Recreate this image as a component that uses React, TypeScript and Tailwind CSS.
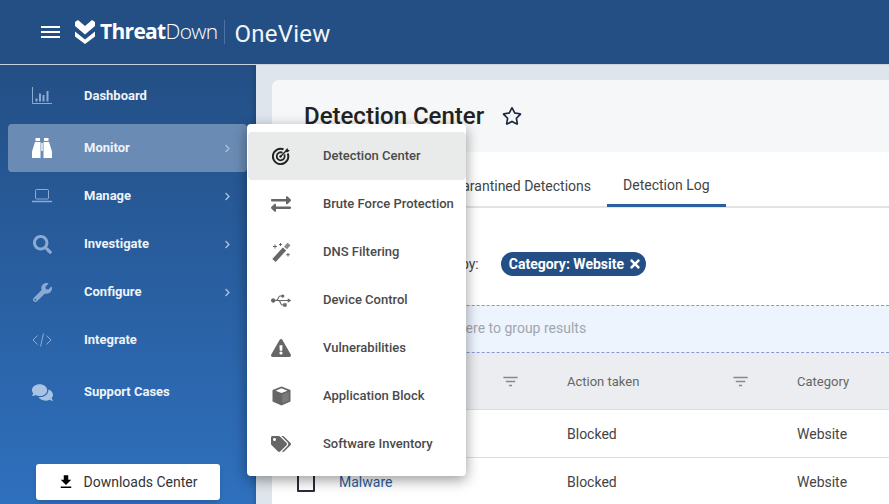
import React from "react";
import { FaSearch, FaWrench, FaComments, FaExchangeAlt, FaUsb, FaExclamationTriangle, FaTags, FaRegStar, FaChevronRight, FaTimes } from "react-icons/fa";
import { MdFileDownload, MdFilterList } from "react-icons/md";

function ChartIcon() {
  return (
    <svg width="20" height="18" viewBox="0 0 20 18" fill="none" stroke="currentColor">
      <path d="M.5 0v16.500H20" />
      <path d="M4.500 14.500v-3M8 14.500V6.500M11.500 14.500V8M15.500 14.500V4" strokeWidth="2" />
    </svg>
  );
}
function LaptopIcon() {
  return (
    <svg width="20" height="14" viewBox="0 0 20 14" fill="none" stroke="currentColor">
      <rect x="3.500" y="0.500" width="13" height="9.500" rx="1" />
      <path d="M.5 12.500h19" strokeWidth="1.500" strokeLinecap="round" />
    </svg>
  );
}
function CodeIcon() {
  return (
    <svg width="20" height="14" viewBox="0 0 20 14" fill="none" stroke="currentColor" strokeWidth="1">
      <path d="M5.500 2.500L1 7l4.500 4.500M14.500 2.500L19 7l-4.500 4.500M11.500 .5L8.500 13.500" />
    </svg>
  );
}
function BinocularsIcon() {
  return (
    <svg width="20" height="20" viewBox="0 0 20 20" fill="currentColor">
      <path d="M3.500 0H8v3H3.500zM12 0h4.500v3H12z" />
      <path d="M3 4h5.500v16H0v-6.500zM17 4h-5.500v16H20v-6.500z" />
      <path d="M9.300 5h1.400v8H9.300z" />
    </svg>
  );
}
function TargetIcon() {
  return (
    <svg width="18" height="18" viewBox="0 0 18 18" fill="none" stroke="#222">
      <path d="M11.500 2.300A7.700 7.700 0 1 0 15.700 6.500" strokeWidth="2" />
      <path d="M10.500 5.700A4 4 0 1 0 12.300 7.500" strokeWidth="1.800" />
      <circle cx="8.500" cy="9.500" r="1.200" fill="#222" stroke="none" />
      <path d="M8.500 9.500L15 3" strokeWidth="1.400" />
      <path d="M13.500 3L15.500 1l.5 1.800 1.800.5-2 2-2-.3z" fill="#222" stroke="none" />
    </svg>
  );
}
function WandIcon() {
  return (
    <svg width="20" height="20" viewBox="0 0 20 20" fill="none" stroke="#666">
      <path d="M3 18.500L13.500 7" strokeWidth="4.500" />
      <path d="M14.500 6L18 2" strokeWidth="4" stroke="#8a8a8a" />
      <path d="M4 2.500v4M2 4.500h4M9.500 1v3M8 2.500h3M17 11v3.500M15.200 12.700h3.600" strokeWidth="1" />
    </svg>
  );
}
function CubeIcon() {
  return (
    <svg width="19" height="20" viewBox="0 0 19 20" fill="#666">
      <path d="M9.500 .5L18.500 4v11.500L9.500 19.500.5 15.500V4z" />
      <path d="M9.500 2.300L15.500 4.700 9.500 7.100 3.500 4.700z" fill="#fff" />
      <path d="M10.200 8.500L16.800 5.900v8.600l-6.600 2.900z" fill="#7a7a7a" />
    </svg>
  );
}
function Logo() {
  return (
    <svg width="20" height="24" viewBox="0 0 20 24" fill="white">
      <path d="M0 2L3 0l7 6 7-6 3 2v4l-10 8.500L0 6z" />
      <path d="M0 11.500l10 8 10-8v5L10 24 0 16.500z" />
    </svg>
  );
}

const nav = [
  { label: "Monitor", icon: <BinocularsIcon />, arrow: true, active: true },
  { label: "Manage", icon: <LaptopIcon />, arrow: true },
  { label: "Investigate", icon: <FaSearch size={19} />, arrow: true },
  { label: "Configure", icon: <FaWrench size={19} />, arrow: true },
  { label: "Integrate", icon: <CodeIcon /> },
];

const menu = [
  { label: "Detection Center", icon: <TargetIcon />, active: true },
  { label: "Brute Force Protection", icon: <FaExchangeAlt size={20} /> },
  { label: "DNS Filtering", icon: <WandIcon /> },
  { label: "Device Control", icon: <FaUsb size={21} /> },
  { label: "Vulnerabilities", icon: <FaExclamationTriangle size={20} /> },
  { label: "Application Block", icon: <CubeIcon /> },
  { label: "Software Inventory", icon: <FaTags size={20} /> },
];

function NavRow({ label, icon, arrow, active }: { label: string; icon: React.ReactNode; arrow?: boolean; active?: boolean }) {
  return (
    <div className={`mx-2 flex h-12 w-[239px] items-center rounded ${active ? "bg-[#6a8bb3]" : ""}`}>
      <div className={`ml-[22px] flex w-[24px] justify-center ${active ? "text-white" : "text-[#8cabd2]"}`}>{icon}</div>
      <span className="ml-[30px] flex-1 text-[13px] font-bold text-[#eef3f9]">{label}</span>
      {arrow && <FaChevronRight size={9} className="mr-[15px] text-[#a9bfdb]" />}
    </div>
  );
}

function Row({ name }: { name?: string }) {
  return (
    <div className="grid h-[48px] grid-cols-[67px_228px_230px_1fr] items-center border-b border-[#dedede] text-[14px] text-[#444]">
      <div className="pl-[25px]">
        <div className="h-[20px] w-[18px] rounded-[1px] border-2 border-[#2c2a3f]" />
      </div>
      <span className="mt-[2px] text-[#2b5fa0]">{name}</span>
      <span className="mt-[2px]">Blocked</span>
      <span className="mt-[2px]">Website</span>
    </div>
  );
}

export default function App() {
  return (
    <div className="relative flex h-[504px] w-[889px] flex-col overflow-hidden bg-[#dfe5ec] font-['Roboto',sans-serif]">
      <header className="flex h-[65px] shrink-0 items-center border-b border-[#c9d3df] bg-[#234f85] pl-[41px] text-white">
        <div className="flex h-[12px] w-[19px] flex-col justify-between">
          <div className="h-[2px] bg-white" />
          <div className="h-[2px] bg-white" />
          <div className="h-[2px] bg-white" />
        </div>
        <div className="ml-[15px]"><Logo /></div>
        <span className="ml-[5px] font-['Open_Sans',sans-serif] text-[21px] font-bold tracking-[-0.7px]">
          Threat<span className="font-light">Down</span>
        </span>
        <div className="ml-[7px] h-[24px] w-px bg-[#4b73a3]" />
        <span className="ml-[9px] pt-[3px] text-[24px] tracking-[0.25px] text-[#f2f5f9]">OneView</span>
      </header>
      <div className="flex min-h-0 flex-1">
        <aside className="flex w-[256px] shrink-0 flex-col bg-gradient-to-b from-[#234f85] to-[#2f70be] pt-[7px] shadow-[inset_-6px_0_6px_-6px_rgba(0,0,0,0.25)]">
          <NavRow label="Dashboard" icon={<ChartIcon />} />
          <div className="mt-1">
            {nav.map((n) => (
              <NavRow key={n.label} {...n} />
            ))}
          </div>
          <div className="mt-1">
            <NavRow label="Support Cases" icon={<FaComments size={21} className="text-[#a8c3e4]" />} />
          </div>
          <button className="mx-auto mb-1 mt-auto flex h-[36px] w-[184px] items-center justify-center gap-[8px] rounded-[3px] bg-white pr-[1px] text-[14px] text-[#333] shadow-md">
            <MdFileDownload size={18} className="text-black" />
            Downloads Center
          </button>
        </aside>
        <main className="min-w-0 flex-1 pl-4 pt-[15px]">
          <div className="h-full overflow-hidden rounded-tl-lg bg-white">
            <div className="flex h-[72px] items-center bg-[#f6f7f9] pl-8">
              <h1 className="text-[24px] font-medium text-[#222]">Detection Center</h1>
              <FaRegStar size={20} className="ml-[18px] text-[#1d2a44]" />
            </div>
            <div className="flex h-[56px] items-end border-b-2 border-[#e3e3e3] pl-[58px] text-[14px] text-[#444]">
              <div className="flex h-[55px] items-center px-4 pt-[16px]">Detections</div>
              <div className="flex h-[55px] items-center px-4 pt-[16px]">Quarantined Detections</div>
              <div className="-mb-[1px] flex h-[56px] items-center border-b-[3px] border-[#2b5fa0] px-4 pt-[16px]">Detection Log</div>
            </div>
            <div className="flex h-[97px] items-center pt-[15px]">
              <span className="ml-[139px] text-[14px] text-[#444]">Filtered by:</span>
              <span className="ml-[22px] flex h-[24px] items-center gap-[4px] rounded-full bg-[#234f85] pl-2 pr-[4px] text-[14px] font-bold text-white">
                Category: Website
                <FaTimes size={14} />
              </span>
            </div>
            <div className="flex h-[48px] items-center border-y border-dashed border-[#8996d6] bg-[#edf4fe] pb-[2px] pl-[46px] text-[14px] text-[#a0a6ad]">
              <span>Drag a column header here to group results</span>
            </div>
            <div className="grid h-[57px] grid-cols-[67px_228px_230px_1fr] items-center border-b border-[#dedede] bg-[#ebedf0] text-[13px] text-[#666]">
              <div />
              <div className="flex items-center justify-between pr-[47px]">
                <span>Name</span>
                <MdFilterList size={19} className="text-[#888]" />
              </div>
              <div className="flex items-center justify-between pr-[47px]">
                <span className="mt-[2px]">Action taken</span>
                <MdFilterList size={19} className="text-[#888]" />
              </div>
              <span className="mt-[2px]">Category</span>
            </div>
            <Row />
            <Row name="Malware" />
          </div>
        </main>
      </div>
      <div className="absolute left-[247px] top-[124px] w-[219px] rounded-[4px] bg-white py-2 pl-px shadow-[0_4px_14px_rgba(0,0,0,0.4)]">
        {menu.map((m) => (
          <div key={m.label} className={`flex h-12 items-center rounded-[4px] ${m.active ? "bg-[#e9ebeb]" : ""}`}>
            <div className="ml-[23px] flex w-[20px] justify-center text-[#666]">{m.icon}</div>
            <span className="ml-[32px] text-[13px] font-medium text-[#4a4a4a]">{m.label}</span>
          </div>
        ))}
      </div>
    </div>
  );
}
